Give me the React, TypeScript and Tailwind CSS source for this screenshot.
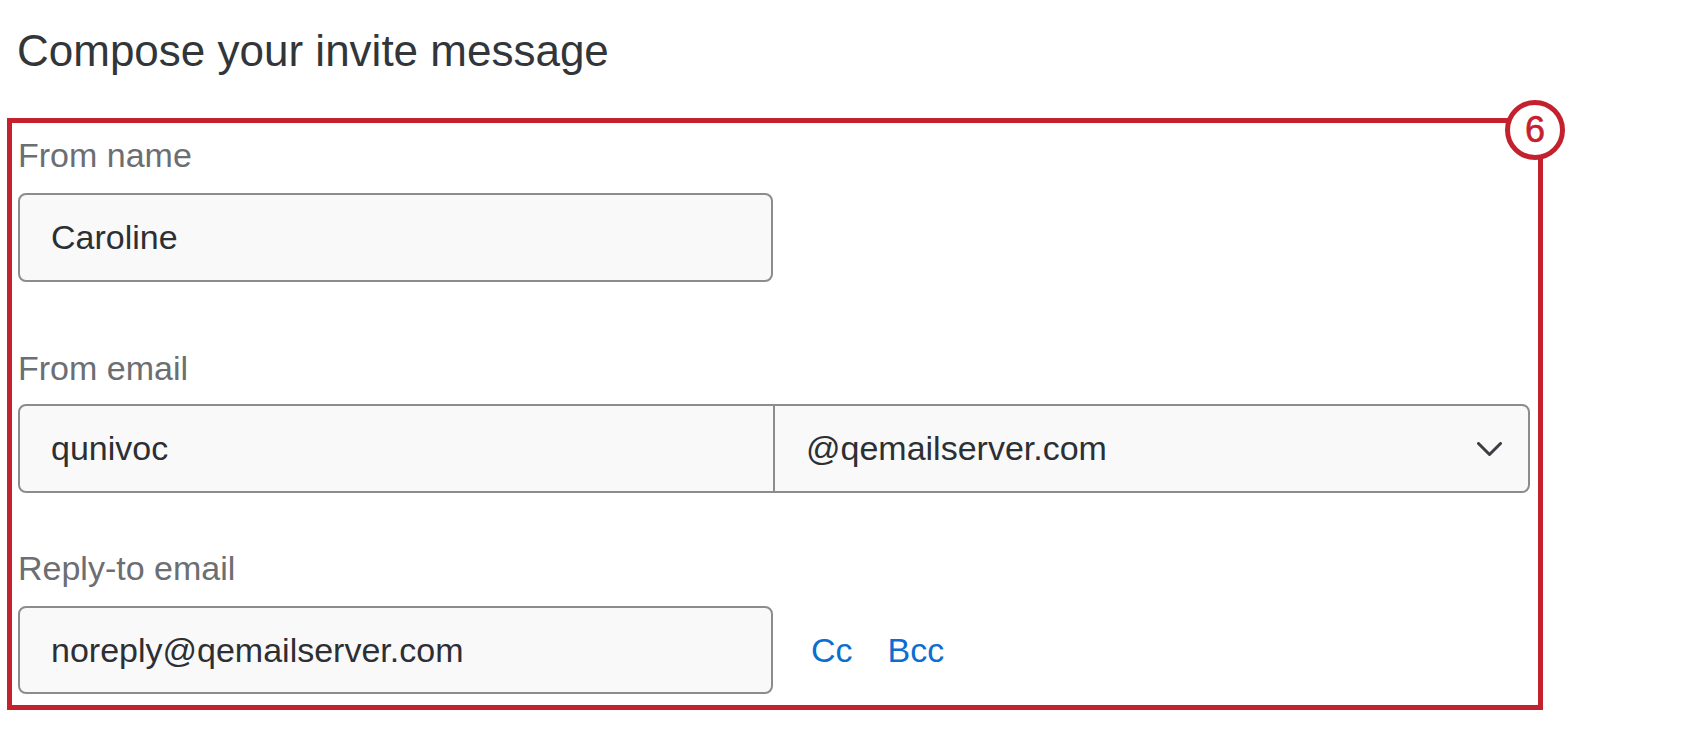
import React from 'react';

const fontStack = "font-['Liberation_Sans',Arial,sans-serif]";

const Label = ({ children, className = '' }: { children: React.ReactNode; className?: string }) => (
  <div className={`text-[34px] leading-[39px] text-[#6b6e72] ${className}`}>{children}</div>
);

const ChevronDown = () => (
  <svg width="25" height="14" viewBox="0 0 25 14" fill="none">
    <polyline points="1.5,1.5 12.5,12.5 23.5,1.5" stroke="#3b3e42" strokeWidth="3" strokeLinecap="round" strokeLinejoin="round" />
  </svg>
);

const App = () => {
  return (
    <div className={`w-[1700px] h-[742px] bg-white ${fontStack}`}>
      <h1 className="pl-[17px] pt-[25px] text-[44px] leading-[51px] font-normal text-[#32363a]">
        Compose your invite message
      </h1>

      {/* highlighted section */}
      <div className="relative ml-[7px] mt-[42px] w-[1536px] border-[5px] border-[#c4212f] pl-[6px] pt-[13px] pb-[11px]">
        <div className="absolute right-[-27px] top-[-23px] flex h-[60px] w-[60px] items-center justify-center rounded-full border-[5px] border-[#c4212f] bg-white pb-[1px] text-[36px] leading-none text-[#c4212f] [-webkit-text-stroke:0.6px_#c4212f]">
          6
        </div>

        <Label>From name</Label>
        <div className="mt-[18px] flex h-[89px] w-[755px] items-center rounded-[8px] border-2 border-[#8c8c8c] bg-[#f9f9f9] pl-[31px] text-[34px] text-[#2c2f33]">
          Caroline
        </div>

        <Label className="mt-[67px]">From email</Label>
        <div className="mt-[16px] flex h-[89px] w-[1512px] rounded-[8px] border-2 border-[#8c8c8c] bg-[#f9f9f9] text-[34px] text-[#2c2f33]">
          <div className="flex w-[755px] items-center border-r-2 border-[#8c8c8c] pl-[31px]">qunivoc</div>
          <div className="flex flex-1 items-center justify-between pl-[31px] pr-[26px]">
            <span>@qemailserver.com</span>
            <ChevronDown />
          </div>
        </div>

        <Label className="mt-[56px]">Reply-to email</Label>
        <div className="mt-[18px] flex items-center">
          <div className="flex h-[88px] w-[755px] items-center rounded-[8px] border-2 border-[#8c8c8c] bg-[#f9f9f9] pl-[31px] text-[34px] text-[#2c2f33]">
            noreply@qemailserver.com
          </div>
          <span className="ml-[38px] text-[34px] text-[#0b6ed0]">Cc</span>
          <span className="ml-[35px] text-[34px] text-[#0b6ed0]">Bcc</span>
        </div>
      </div>
    </div>
  );
};

export default App;
